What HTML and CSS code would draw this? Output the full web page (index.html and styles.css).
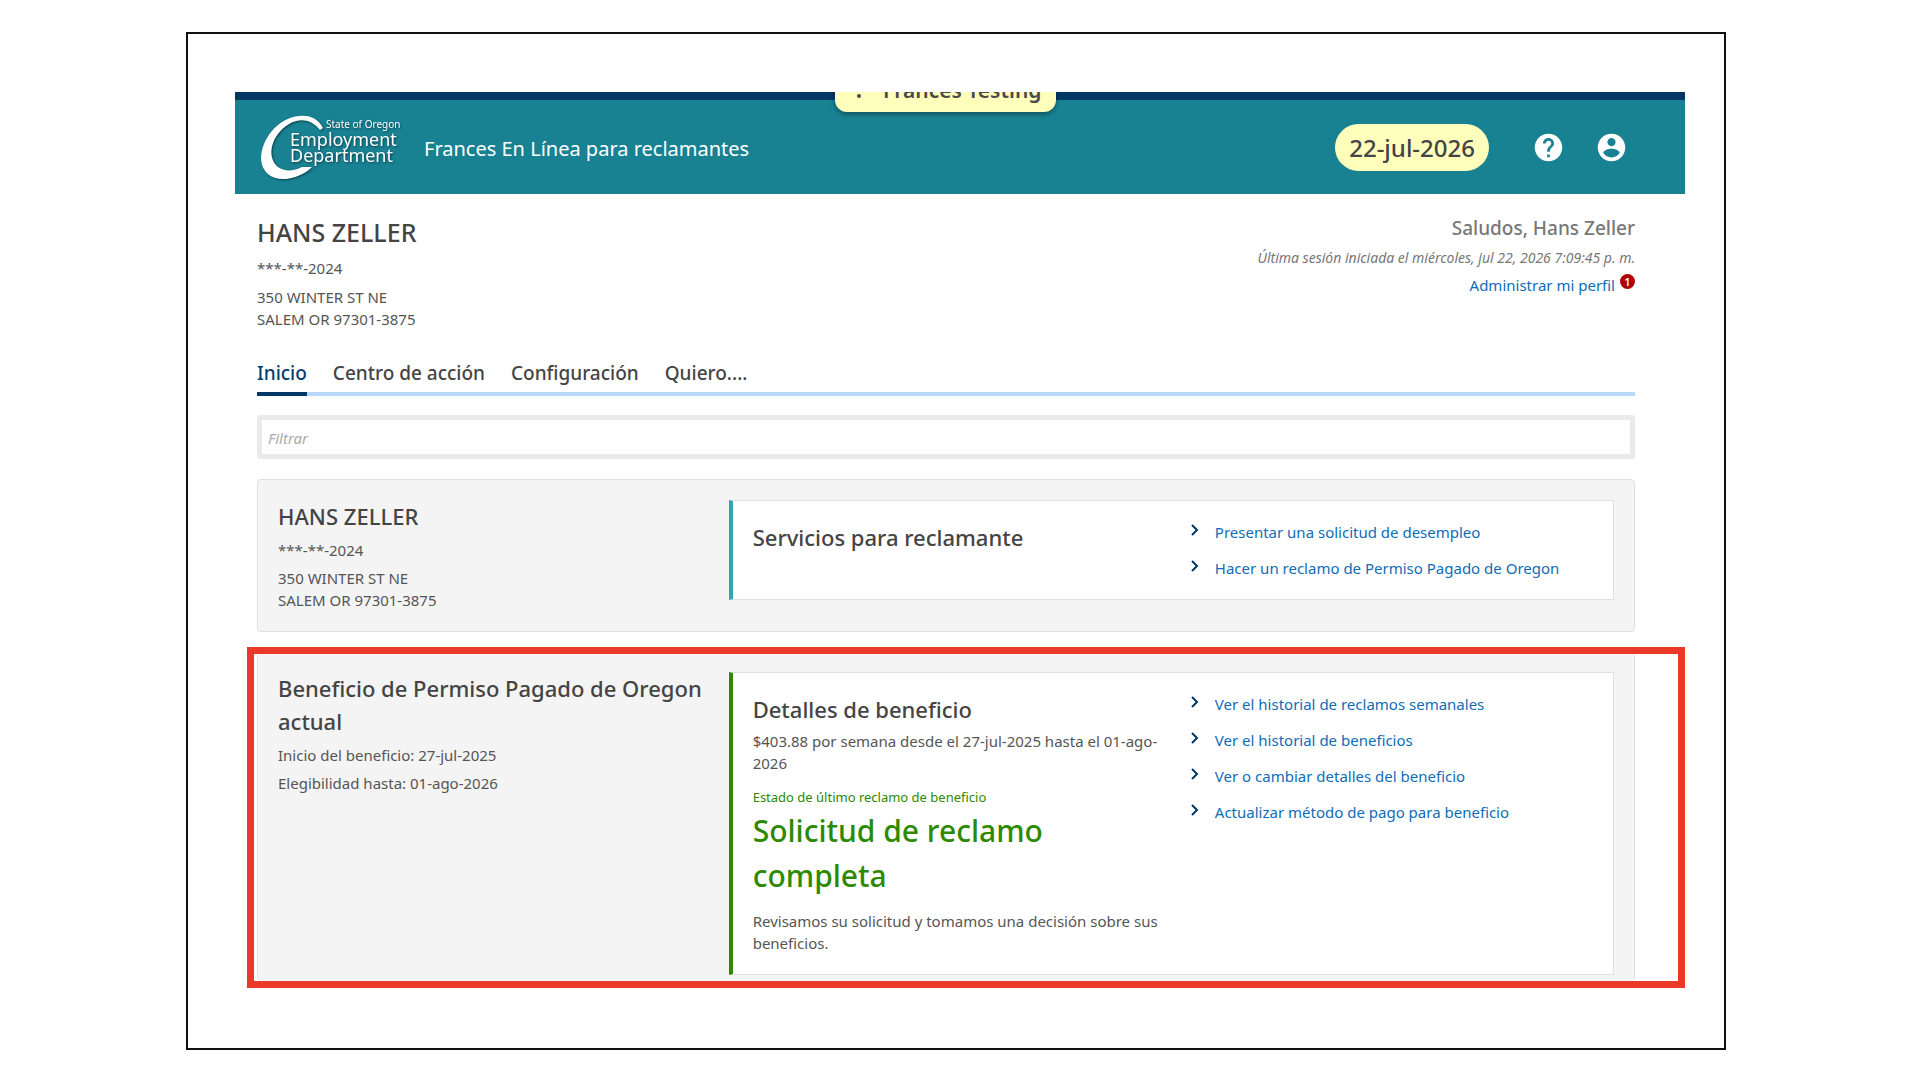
FILE: index.html
```html
<!DOCTYPE html>
<html lang="es">

<head>
    <meta charset="UTF-8">
    <meta name="viewport" content="width=device-width, initial-scale=1.0">
    <title>Frances En Línea para reclamantes</title>
    <link rel="stylesheet" href="styles.css">
</head>

<body>
    <div class="frame">
        <header class="topbar">
            <div class="testing">
                <svg width="24" height="24" viewBox="0 0 24 24"><circle cx="12" cy="6" r="2"/><circle cx="12" cy="12" r="2"/><circle cx="12" cy="18" r="2"/></svg>
                <span>Frances Testing</span>
            </div>
            <svg class="logo" width="144" height="68" viewBox="0 0 144 68" role="img" aria-label="State of Oregon Employment Department">
                <path d="M63 15 C57 4 48 2 39 3 C18 5 1 26 1 46 C2 60 12 67 26 66 C38 64 46 60 52 54 L42 54 C34 58 25 59 18 54 C6 44 11 22 29 11 C40 5 51 6 60 17 Z"/>
                <text class="logo-small" x="66" y="15">State of Oregon</text>
                <text class="logo-big" x="30" y="33">Employment</text>
                <text class="logo-big" x="30" y="49">Department</text>
            </svg>
            <h1>Frances En Línea para reclamantes</h1>
            <span class="date">22-jul-2026</span>
            <button class="icon-btn" aria-label="Ayuda">
                <svg width="33" height="33" viewBox="0 0 24 24"><path d="M12 2C6.48 2 2 6.48 2 12s4.48 10 10 10 10-4.48 10-10S17.52 2 12 2zm1 17h-2v-2h2v2zm2.07-7.75l-.9.92C13.45 12.9 13 13.5 13 15h-2v-.5c0-1.1.45-2.1 1.17-2.83l1.24-1.26c.37-.36.59-.86.59-1.41 0-1.1-.9-2-2-2s-2 .9-2 2H8c0-2.21 1.79-4 4-4s4 1.79 4 4c0 .88-.36 1.68-.93 2.25z"/></svg>
            </button>
            <button class="icon-btn" aria-label="Mi cuenta">
                <svg width="33" height="33" viewBox="0 0 24 24"><path d="M12 2C6.48 2 2 6.48 2 12s4.48 10 10 10 10-4.48 10-10S17.52 2 12 2zm0 3c1.66 0 3 1.34 3 3s-1.34 3-3 3-3-1.34-3-3 1.34-3 3-3zm0 14.2c-2.5 0-4.71-1.28-6-3.22.03-1.99 4-3.08 6-3.08 1.99 0 5.97 1.09 6 3.08-1.29 1.94-3.5 3.22-6 3.22z"/></svg>
            </button>
        </header>

        <main>
            <div class="profile">
                <div>
                    <h2 class="name">HANS ZELLER</h2>
                    <p>***-**-2024</p>
                    <p>350 WINTER ST NE<br>SALEM OR 97301-3875</p>
                </div>
                <div class="greeting">
                    <strong>Saludos, Hans Zeller</strong>
                    <em>Última sesión iniciada el miércoles, jul 22, 2026 7:09:45 p. m.</em>
                    <div class="manage"><a href="#">Administrar mi perfil</a><span class="badge">1</span></div>
                </div>
            </div>

            <nav class="tabs">
                <a class="active" href="#">Inicio</a>
                <a href="#">Centro de acción</a>
                <a href="#">Configuración</a>
                <a href="#">Quiero....</a>
            </nav>

            <input class="filter" type="text" placeholder="Filtrar" aria-label="Filtrar">

            <section class="card">
                <div class="info">
                    <h3>HANS ZELLER</h3>
                    <p>***-**-2024</p>
                    <p>350 WINTER ST NE<br>SALEM OR 97301-3875</p>
                </div>
                <div class="panel">
                    <h3>Servicios para reclamante</h3>
                    <ul class="links">
                        <li><svg class="arrow" width="8" height="12" viewBox="0 0 8 12"><path d="M1 1l5 5-5 5"/></svg><a href="#">Presentar una solicitud de desempleo</a></li>
                        <li><svg class="arrow" width="8" height="12" viewBox="0 0 8 12"><path d="M1 1l5 5-5 5"/></svg><a href="#">Hacer un reclamo de Permiso Pagado de Oregon</a></li>
                    </ul>
                </div>
            </section>

            <section class="card benefit">
                <div class="info">
                    <h3>Beneficio de Permiso Pagado de Oregon actual</h3>
                    <p>Inicio del beneficio: 27-jul-2025</p>
                    <p>Elegibilidad hasta: 01-ago-2026</p>
                </div>
                <div class="panel green">
                    <div>
                        <h3>Detalles de beneficio</h3>
                        <p class="amount">$403.88 por semana desde el 27-jul-2025 hasta el 01-ago-2026</p>
                        <p class="status-label">Estado de último reclamo de beneficio</p>
                        <p class="status">Solicitud de reclamo completa</p>
                        <p class="note">Revisamos su solicitud y tomamos una decisión sobre sus beneficios.</p>
                    </div>
                    <ul class="links">
                        <li><svg class="arrow" width="8" height="12" viewBox="0 0 8 12"><path d="M1 1l5 5-5 5"/></svg><a href="#">Ver el historial de reclamos semanales</a></li>
                        <li><svg class="arrow" width="8" height="12" viewBox="0 0 8 12"><path d="M1 1l5 5-5 5"/></svg><a href="#">Ver el historial de beneficios</a></li>
                        <li><svg class="arrow" width="8" height="12" viewBox="0 0 8 12"><path d="M1 1l5 5-5 5"/></svg><a href="#">Ver o cambiar detalles del beneficio</a></li>
                        <li><svg class="arrow" width="8" height="12" viewBox="0 0 8 12"><path d="M1 1l5 5-5 5"/></svg><a href="#">Actualizar método de pago para beneficio</a></li>
                    </ul>
                </div>
                <div class="highlight"></div>
            </section>
        </main>
    </div>
</body>

</html>
```
FILE: styles.css
```css
* {
    box-sizing: border-box;
}

body {
    margin: 32px 194px 30px 186px;
    background-color: #fff;
    color: #555;
    font-family: "Noto Sans", "Open Sans", sans-serif;
    font-size: 15px;
    line-height: 22px;
}

h1, h2, h3, p, ul {
    margin: 0;
    padding: 0;
}

a {
    color: #0f6cb6;
    text-decoration: none;
}

.frame {
    border: 2px solid #111;
    padding: 58px 39px 67px 47px;
}

/* header */
.topbar {
    position: relative;
    display: flex;
    align-items: center;
    height: 102px;
    padding: 8px 57px 0 25px;
    overflow: hidden;
    background-color: #188293;
    box-shadow: inset 0 8px #003865;
}

.testing {
    position: absolute;
    top: -30px;
    left: 600px;
    display: flex;
    align-items: center;
    gap: 12px;
    width: 221px;
    height: 50px;
    padding: 6px 0 0 12px;
    border-radius: 12px;
    background-color: #ffffbb;
    box-shadow: 0 2px 5px rgba(0, 0, 0, 0.4);
    color: #4a4a4a;
    font-size: 21px;
    font-weight: 600;
    white-space: nowrap;
}

.testing svg {
    fill: #4a4a4a;
}

.logo {
    margin-right: 20px;
    fill: #fff;
    filter: drop-shadow(1px 1px 1px rgba(0, 0, 0, 0.5));
}

.logo-small {
    font-size: 10px;
}

.logo-big {
    font-size: 18px;
}

h1 {
    flex: 1;
    padding-top: 4px;
    color: #fff;
    font-size: 20px;
    font-weight: 400;
}

.date {
    padding: 7px 14px;
    border-radius: 24px;
    background-color: #ffffbb;
    color: #444;
    font-size: 24px;
    font-weight: 500;
    line-height: 33px;
}

.icon-btn {
    display: flex;
    margin-left: 30px;
    padding: 0;
    border: 0;
    background: none;
    cursor: pointer;
}

.icon-btn svg {
    fill: #fff;
}

.date + .icon-btn {
    margin-left: 43px;
}

/* content */
main {
    margin: 0 50px 0 22px;
}

.profile {
    display: flex;
    justify-content: space-between;
    padding-top: 20px;
}

.name {
    color: #444;
    font-size: 25px;
    font-weight: 500;
    line-height: 36px;
}

.profile p {
    margin-top: 7px;
}

.greeting {
    display: flex;
    flex-direction: column;
    align-items: flex-end;
    gap: 5px;
    color: #777;
}

.greeting strong {
    font-size: 19px;
    font-weight: 500;
    line-height: 28px;
}

.greeting em {
    font-size: 14px;
}

.manage {
    display: flex;
    gap: 5px;
}

.badge {
    width: 15px;
    height: 15px;
    border-radius: 50%;
    background-color: #b00000;
    color: #fff;
    font-size: 11px;
    font-weight: 600;
    line-height: 15px;
    text-align: center;
}

.tabs {
    display: flex;
    gap: 26px;
    margin-top: 29px;
    box-shadow: inset 0 -4px #b8d8f8;
}

.tabs a {
    padding-bottom: 5px;
    border-bottom: 4px solid transparent;
    color: #444;
    font-size: 19px;
    font-weight: 500;
    line-height: 28px;
}

.tabs a.active {
    border-color: #003865;
    color: #003f72;
}

.filter {
    display: block;
    width: 100%;
    height: 44px;
    margin-top: 19px;
    padding: 2px 6px 0;
    border: 5px solid #eaeaea;
    border-radius: 3px;
    font: inherit;
}

.filter::placeholder {
    color: #aaa;
    font-style: italic;
}

.card {
    display: grid;
    grid-template-columns: 1fr 2fr;
    gap: 8px;
    align-items: start;
    margin-top: 20px;
    padding: 20px;
    border: 1px solid #e0e0e0;
    border-radius: 4px;
    background-color: #f4f4f4;
}

.card h3 {
    color: #444;
    font-size: 22px;
    font-weight: 500;
    line-height: 33px;
}

.info p {
    margin-top: 6px;
}

.panel {
    display: grid;
    grid-template-columns: 1fr 1fr;
    gap: 20px;
    padding: 20px;
    border: 1px solid #e0e0e0;
    border-left: 4px solid #2fa5b2;
    background-color: #fff;
}

.links {
    display: flex;
    flex-direction: column;
    gap: 14px;
    padding-left: 8px;
    list-style: none;
}

.links li {
    display: flex;
    gap: 16px;
}

.arrow {
    flex: none;
    margin-top: 3px;
    fill: none;
    stroke: #003865;
    stroke-width: 2;
}

/* benefit card, its lower edge is cut off */
.benefit {
    position: relative;
    padding-bottom: 6px;
    border-top: 0;
    border-bottom: 0;
}

.green {
    border-left-color: #2d8a00;
}

.amount {
    margin-top: 4px;
}

.status-label {
    margin-top: 12px;
    color: #2d8a00;
    font-size: 13px;
}

.status {
    color: #2d8a00;
    font-size: 30px;
    font-weight: 500;
    line-height: 45px;
}

.note {
    margin-top: 12px;
}

.highlight {
    position: absolute;
    inset: -5px -51px -7px -11px;
    border: 7px solid #ea3829;
    pointer-events: none;
}
```
